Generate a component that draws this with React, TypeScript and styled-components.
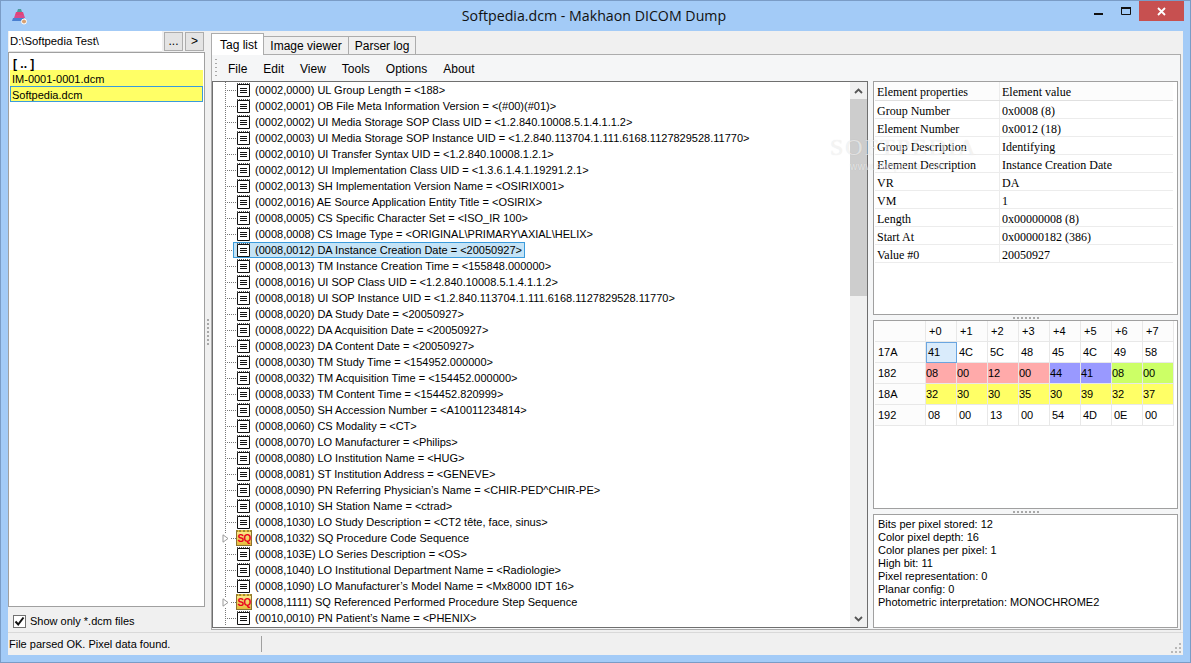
import React from 'react';
import styled, { createGlobalStyle } from 'styled-components';

const tags: [string, boolean?][] = [
  ['(0002,0000) UL Group Length = <188>'],
  ['(0002,0001) OB File Meta Information Version = <(#00)(#01)>'],
  ['(0002,0002) UI Media Storage SOP Class UID = <1.2.840.10008.5.1.4.1.1.2>'],
  ['(0002,0003) UI Media Storage SOP Instance UID = <1.2.840.113704.1.111.6168.1127829528.11770>'],
  ['(0002,0010) UI Transfer Syntax UID = <1.2.840.10008.1.2.1>'],
  ['(0002,0012) UI Implementation Class UID = <1.3.6.1.4.1.19291.2.1>'],
  ['(0002,0013) SH Implementation Version Name = <OSIRIX001>'],
  ['(0002,0016) AE Source Application Entity Title = <OSIRIX>'],
  ['(0008,0005) CS Specific Character Set = <ISO_IR 100>'],
  ['(0008,0008) CS Image Type = <ORIGINAL\\PRIMARY\\AXIAL\\HELIX>'],
  ['(0008,0012) DA Instance Creation Date = <20050927>'],
  ['(0008,0013) TM Instance Creation Time = <155848.000000>'],
  ['(0008,0016) UI SOP Class UID = <1.2.840.10008.5.1.4.1.1.2>'],
  ['(0008,0018) UI SOP Instance UID = <1.2.840.113704.1.111.6168.1127829528.11770>'],
  ['(0008,0020) DA Study Date = <20050927>'],
  ['(0008,0022) DA Acquisition Date = <20050927>'],
  ['(0008,0023) DA Content Date = <20050927>'],
  ['(0008,0030) TM Study Time = <154952.000000>'],
  ['(0008,0032) TM Acquisition Time = <154452.000000>'],
  ['(0008,0033) TM Content Time = <154452.820999>'],
  ['(0008,0050) SH Accession Number = <A10011234814>'],
  ['(0008,0060) CS Modality = <CT>'],
  ['(0008,0070) LO Manufacturer = <Philips>'],
  ['(0008,0080) LO Institution Name = <HUG>'],
  ['(0008,0081) ST Institution Address = <GENEVE>'],
  ['(0008,0090) PN Referring Physician\u2019s Name = <CHIR-PED^CHIR-PE>'],
  ['(0008,1010) SH Station Name = <ctrad>'],
  ['(0008,1030) LO Study Description = <CT2 t\u00eate, face, sinus>'],
  ['(0008,1032) SQ Procedure Code Sequence', true],
  ['(0008,103E) LO Series Description = <OS>'],
  ['(0008,1040) LO Institutional Department Name = <Radiologie>'],
  ['(0008,1090) LO Manufacturer\u2019s Model Name = <Mx8000 IDT 16>'],
  ['(0008,1111) SQ Referenced Performed Procedure Step Sequence', true],
  ['(0010,0010) PN Patient\u2019s Name = <PHENIX>'],
];

const properties = [
  ['Element properties', 'Element value'],
  ['Group Number', '0x0008 (8)'],
  ['Element Number', '0x0012 (18)'],
  ['Group Description', 'Identifying'],
  ['Element Description', 'Instance Creation Date'],
  ['VR', 'DA'],
  ['VM', '1'],
  ['Length', '0x00000008 (8)'],
  ['Start At', '0x00000182 (386)'],
  ['Value #0', '20050927'],
];

const hexRows: { offset: string; cells: [string, string?][] }[] = [
  { offset: '17A', cells: [['41', 'sel'], ['4C'], ['5C'], ['48'], ['45'], ['4C'], ['49'], ['58']] },
  {
    offset: '182',
    cells: [['08', 'r'], ['00', 'r'], ['12', 'r'], ['00', 'r'], ['44', 'b'], ['41', 'b'], ['08', 'g'], ['00', 'g']],
  },
  {
    offset: '18A',
    cells: [['32', 'y'], ['30', 'y'], ['30', 'y'], ['35', 'y'], ['30', 'y'], ['39', 'y'], ['32', 'y'], ['37', 'y']],
  },
  { offset: '192', cells: [['08'], ['00'], ['13'], ['00'], ['54'], ['4D'], ['0E'], ['00']] },
];

const imageInfo = [
  'Bits per pixel stored: 12',
  'Color pixel depth: 16',
  'Color planes per pixel: 1',
  'High bit: 11',
  'Pixel representation: 0',
  'Planar config: 0',
  'Photometric interpretation: MONOCHROME2',
];

const cellColors: Record<string, string> = {
  r: '#ffaaaa',
  b: '#9999ff',
  g: '#ccff66',
  y: '#ffff66',
  sel: '#d9ebfb',
};

const GlobalStyle = createGlobalStyle`
  html, body { margin: 0; padding: 0; height: 100%; overflow: hidden; }
  body { font-family: 'Liberation Sans', Arial, sans-serif; font-size: 11px; color: #000; }
  * { box-sizing: border-box; }
`;

const Window = styled.div`
  width: 1191px;
  height: 663px;
  background: #a3cbf7;
  border: 1px solid #7a9cc6;
  display: flex;
  flex-direction: column;
  padding: 0 7px 7px;
`;

const TitleBar = styled.div`
  height: 30px;
  flex: none;
  display: flex;
  align-items: flex-start;
  margin: 0 -1px 0 -1px;
`;

const AppIcon = styled.svg`
  width: 18px;
  height: 18px;
  margin: 6px 0 0 3px;
  flex: none;
`;

const Title = styled.div`
  flex: 1;
  text-align: center;
  font-family: 'Open Sans', sans-serif;
  font-size: 14.2px;
  line-height: 30px;
  padding-left: 75px;
  color: #111;
`;

const WinButton = styled.div<{ $w: number; $close?: boolean }>`
  width: ${(p) => p.$w}px;
  height: 20px;
  flex: none;
  display: flex;
  align-items: center;
  justify-content: center;
  background: ${(p) => (p.$close ? '#c75050' : 'transparent')};
`;

const Client = styled.div`
  flex: 1;
  min-height: 0;
  background: #f0f0f0;
  display: flex;
  flex-direction: column;
`;

const Main = styled.div`
  flex: 1;
  min-height: 0;
  display: flex;
`;

const LeftPane = styled.div`
  width: 197px;
  flex: none;
  display: flex;
  flex-direction: column;
`;

const PathRow = styled.div`
  height: 21px;
  flex: none;
  display: flex;
  padding-left: 1px;
`;

const PathInput = styled.div`
  width: 153px;
  background: #fff;
  border-bottom: 1px solid #e3e3e3;
  padding-left: 1px;
  line-height: 20px;
  font-size: 11.3px;
`;

const SmallButton = styled.div`
  width: 19px;
  height: 19px;
  margin: 1px 0 0 2px;
  background: #e4e4e4;
  border: 1px solid #adadad;
  text-align: center;
  line-height: 17px;
  font-size: 12px;
`;

const FileList = styled.div`
  height: 555px;
  flex: none;
  background: #fff;
  border: 1px solid #a0a0a0;
  padding: 1px;
  font-size: 11px;
`;

const FileRow = styled.div<{ $yellow?: boolean; $focus?: boolean; $bold?: boolean }>`
  height: 16px;
  line-height: ${(p) => (p.$bold ? 20 : p.$focus ? 17 : 19)}px;
  background: ${(p) => (p.$yellow ? '#ffff66' : 'transparent')};
  font-weight: ${(p) => (p.$bold ? 700 : 400)};
  font-size: ${(p) => (p.$bold ? 12 : 11)}px;
  border: ${(p) => (p.$focus ? '1px solid #3a9bdc' : 'none')};
  padding-left: ${(p) => (p.$bold ? 3 : p.$focus ? 1 : 2)}px;
`;

const CheckRow = styled.div`
  height: 25px;
  flex: none;
  display: flex;
  align-items: center;
  gap: 4px;
  padding: 3px 0 0 5px;
`;

const CheckBox = styled.div`
  width: 13px;
  height: 13px;
  background: #fff;
  border: 1px solid #707070;
  display: flex;
  align-items: center;
  justify-content: center;
`;

const VSplitter = styled.div`
  width: 6px;
  flex: none;
  display: flex;
  flex-direction: column;
  align-items: center;
  justify-content: center;
  gap: 2px;
`;

const GripDot = styled.i`
  width: 2px;
  height: 2px;
  background: #a8a8a8;
  display: block;
`;

const TabArea = styled.div`
  flex: 1;
  min-width: 0;
  display: flex;
  flex-direction: column;
  padding: 5px 2px 2px 0;
`;

const TabStrip = styled.div`
  height: 18px;
  flex: none;
  display: flex;
  position: relative;
  z-index: 1;
`;

const Tab = styled.div<{ $active?: boolean }>`
  height: ${(p) => (p.$active ? 22 : 19)}px;
  margin-top: ${(p) => (p.$active ? -3 : 0)}px;
  padding: 0 6px 0 ${(p) => (p.$active ? 8 : 6)}px;
  margin-right: -1px;
  background: ${(p) => (p.$active ? '#fff' : '#f0f0f0')};
  border: 1px solid #acacac;
  border-bottom: ${(p) => (p.$active ? 'none' : '1px solid #acacac')};
  line-height: ${(p) => (p.$active ? 22 : 18)}px;
  font-size: 12px;
`;

const Page = styled.div`
  flex: 1;
  min-height: 0;
  background: #f5f6f7;
  border: 1px solid #acacac;
  display: flex;
  flex-direction: column;
  padding-right: 1px;
`;

const ToolBar = styled.div`
  height: 26px;
  flex: none;
  display: flex;
  align-items: center;
  padding: 2px 0 0 3px;
`;

const ToolGrip = styled.div`
  width: 2px;
  height: 20px;
  background: repeating-linear-gradient(to bottom, #a8a8a8 0 1px, transparent 1px 4px);
  margin-right: 11px;
`;

const MenuItem = styled.span`
  font-size: 12px;
  margin-right: 16px;
`;

const Work = styled.div`
  flex: 1;
  min-height: 0;
  display: flex;
`;

const TreePane = styled.div`
  width: 656px;
  flex: none;
  background: #fff;
  border: 1px solid #6f6f6f;
  display: flex;
  min-height: 0;
  margin-bottom: 1px;
`;

const TreeBody = styled.div`
  flex: 1;
  min-width: 0;
  overflow: hidden;
`;

const Row = styled.div`
  height: 16px;
  display: flex;
  align-items: center;
`;

const Connector = styled.div`
  width: 23px;
  height: 16px;
  flex: none;
  display: flex;
  align-items: center;
  padding-left: 9px;
  background:
    repeating-linear-gradient(to bottom, #777 0 1px, transparent 1px 2px) 12px 0 / 1px 16px no-repeat,
    repeating-linear-gradient(to right, #777 0 1px, transparent 1px 2px) 12px 8px / 11px 1px no-repeat;
`;

const Expander = styled.svg`
  width: 7px;
  height: 9px;
  background: #fff;
  box-shadow: 0 0 0 1px #fff;
`;

const DocIcon = styled.svg`
  width: 15px;
  height: 16px;
  flex: none;
`;

const Folder = styled.div`
  width: 16px;
  height: 16px;
  flex: none;
  margin-right: -1px;
  background: linear-gradient(#fbe98a, #e6bb3c);
  border: 1px solid #8a7230;
  border-top: 2px dotted #a08a30;
  color: #e8001c;
  font-family: 'Liberation Sans', sans-serif;
  font-size: 10px;
  font-weight: 700;
  line-height: 13px;
  text-align: center;
  letter-spacing: -0.7px;
`;

const TagLabel = styled.div`
  height: 16px;
  flex: none;
  margin-left: 2px;
  padding: 0 2px;
  line-height: 16px;
  white-space: nowrap;
  font-size: 11px;
  color: #000;
`;

const SelectedWrap = styled.div`
  display: flex;
  align-items: center;
  height: 16px;
  background: #c4e3f6;
  border: 1px solid #3a9bdc;
  margin-left: -3px;
  padding-left: 2px;
`;

const ScrollBar = styled.div`
  width: 17px;
  flex: none;
  background: #f0f0f0;
  display: flex;
  flex-direction: column;
`;

const ScrollArrow = styled.div`
  height: 17px;
  flex: none;
  display: flex;
  align-items: center;
  justify-content: center;
`;

const ScrollThumb = styled.div`
  height: 197px;
  flex: none;
  background: #cdcdcd;
`;

const ScrollTrack = styled.div`
  flex: 1;
`;

const RightPane = styled.div`
  width: 305px;
  margin-left: 5px;
  flex: none;
  display: flex;
  flex-direction: column;
  margin-bottom: 1px;
`;

const Panel = styled.div<{ $h: number }>`
  height: ${(p) => p.$h}px;
  flex: none;
  background: #fff;
  border: 1px solid #a0a0a0;
  overflow: hidden;
`;

const HGrip = styled.div`
  height: 5px;
  flex: none;
  display: flex;
  align-items: center;
  justify-content: center;
  gap: 2px;
`;

const PropRow = styled.div`
  display: flex;
  height: 18px;
  width: 298px;
  margin-left: 1px;
  border-bottom: 1px solid #ececec;
  font-family: 'Liberation Serif', serif;
  font-size: 12px;
  line-height: 20px;
  &:first-child { height: 19px; background: #fcfcfc; border-bottom-color: #e0e0e0; }
`;

const PropName = styled.div`
  width: 125px;
  flex: none;
  padding-left: 2px;
  border-right: 1px solid #ececec;
`;

const PropValue = styled.div`
  flex: 1;
  padding-left: 2px;
`;

const HexGrid = styled.div`
  display: grid;
  grid-template-columns: 51px repeat(8, 31px);
  grid-auto-rows: 21px;
  margin-left: 1px;
`;

const HexHead = styled.div`
  background: #fcfcfc;
  border-right: 1px solid #e8e8e8;
  border-bottom: 1px solid #e8e8e8;
  padding-left: 3px;
  line-height: 20px;
  font-size: 11px;
`;

const HexOffset = styled(HexHead)`
  line-height: 21px;
`;

const HexCell = styled.div<{ $kind?: string }>`
  background: ${(p) => (p.$kind ? cellColors[p.$kind] : '#fff')};
  border-right: 1px solid #e8e8e8;
  border-bottom: 1px solid #e8e8e8;
  border: ${(p) => (p.$kind === 'sel' ? '1px solid #6aa5e0' : '')};
  padding-left: ${(p) => (p.$kind === 'sel' ? 1 : p.$kind ? 0 : 2)}px;
  line-height: ${(p) => (p.$kind === 'sel' ? 19 : 21)}px;
  font-size: 11px;
`;

const InfoText = styled.div`
  padding: 3px 0 0 4px;
  font-size: 11px;
  line-height: 13px;
`;

const StatusBar = styled.div`
  height: 23px;
  flex: none;
  border-top: 1px solid #d9d9d9;
  display: flex;
  align-items: center;
  justify-content: space-between;
  font-size: 11px;
`;

const StatusText = styled.div`
  width: 254px;
  height: 16px;
  line-height: 17px;
  padding-left: 1px;
  border-right: 1px solid #a0a0a0;
`;

const SizeGrip = styled.svg`
  width: 12px;
  height: 12px;
  margin: 8px 1px 0 0;
`;

const Watermark = styled.div`
  position: absolute;
  left: 830px;
  top: 134px;
  pointer-events: none;
  font-family: 'Liberation Serif', serif;
  font-size: 24px;
  line-height: 26px;
  letter-spacing: 2px;
  color: rgba(255, 255, 255, 0.6);
  text-shadow: 0 0 1px rgba(0, 0, 0, 0.12);
`;

const WatermarkUrl = styled.div`
  font-family: 'Liberation Sans', sans-serif;
  font-size: 10px;
  line-height: 11px;
  letter-spacing: 0.5px;
  margin: 1px 0 0 20px;
`;

const Doc = () => (
  <DocIcon viewBox="0 0 15 16">
    <path d="M1.5 2.5h12v12h-12z" fill="#fff" stroke="#111" />
    <path d="M1 1.5h13" stroke="#555" strokeDasharray="1 1" />
    <path d="M4 6.5h7M4 8.5h7M4 10.5h7" stroke="#111" />
  </DocIcon>
);

const Grip = ({ n }: { n: number }) => (
  <>
    {Array.from({ length: n }, (_, i) => (
      <GripDot key={i} />
    ))}
  </>
);

const TagRow = ({ text, seq, selected }: { text: string; seq?: boolean; selected?: boolean }) => {
  const icon = seq ? <Folder>SQ</Folder> : <Doc />;
  return (
    <Row>
      <Connector>
        {seq && (
          <Expander viewBox="0 0 7 9">
            <path d="M1 .8 6 4.5 1 8.2z" fill="#fff" stroke="#999" />
          </Expander>
        )}
      </Connector>
      {selected ? (
        <SelectedWrap>
          {icon}
          <TagLabel>{text}</TagLabel>
        </SelectedWrap>
      ) : (
        <>
          {icon}
          <TagLabel>{text}</TagLabel>
        </>
      )}
    </Row>
  );
};

export default function App() {
  return (
    <>
      <GlobalStyle />
      <Window>
        <TitleBar>
          <AppIcon viewBox="0 0 18 18">
            <path d="M8 2h3l1 3H7z" fill="#4a9a9a" />
            <path d="M6 5h7l1 3H5z" fill="#e0447a" />
            <path d="M5 8h9l1 3H4z" fill="#d94a8c" />
            <path d="M3 11h11v3H2z" fill="#4a7fd0" />
            <circle cx="14" cy="14.5" r="2.5" fill="#d8a070" stroke="#fff" />
          </AppIcon>
          <Title>Softpedia.dcm - Makhaon DICOM Dump</Title>
          <WinButton $w={27}>
            <svg width="9" height="20" viewBox="0 0 9 20">
              <rect width="9" height="2" y="12" fill="#111" />
            </svg>
          </WinButton>
          <WinButton $w={27}>
            <svg width="10" height="20" viewBox="0 0 10 20">
              <path d="M.5 7.5h9v6h-9z" fill="none" stroke="#111" />
              <path d="M0 7h10" stroke="#111" strokeWidth="2" />
            </svg>
          </WinButton>
          <WinButton $w={45} $close>
            <svg width="9" height="9" viewBox="0 0 9 9">
              <path d="M1 1l7 7M8 1l-7 7" stroke="#fff" strokeWidth="1.8" />
            </svg>
          </WinButton>
        </TitleBar>
        <Client>
          <Main>
            <LeftPane>
              <PathRow>
                <PathInput>D:\Softpedia Test\</PathInput>
                <SmallButton>...</SmallButton>
                <SmallButton>&gt;</SmallButton>
              </PathRow>
              <FileList>
                <FileRow $bold>[ .. ]</FileRow>
                <FileRow $yellow>IM-0001-0001.dcm</FileRow>
                <FileRow $yellow $focus>Softpedia.dcm</FileRow>
              </FileList>
              <CheckRow>
                <CheckBox>
                  <svg width="11" height="11" viewBox="0 0 11 11">
                    <path d="M1.5 5.5 4.2 8.5 9.5 1.5" fill="none" stroke="#111" strokeWidth="2" />
                  </svg>
                </CheckBox>
                Show only *.dcm files
              </CheckRow>
            </LeftPane>
            <VSplitter>
              <Grip n={7} />
            </VSplitter>
            <TabArea>
              <TabStrip>
                <Tab $active>Tag list</Tab>
                <Tab>Image viewer</Tab>
                <Tab>Parser log</Tab>
              </TabStrip>
              <Page>
                <ToolBar>
                  <ToolGrip />
                  <MenuItem>File</MenuItem>
                  <MenuItem>Edit</MenuItem>
                  <MenuItem>View</MenuItem>
                  <MenuItem>Tools</MenuItem>
                  <MenuItem>Options</MenuItem>
                  <MenuItem>About</MenuItem>
                </ToolBar>
                <Work>
                  <TreePane>
                    <TreeBody>
                      {tags.map(([text, seq], i) => (
                        <TagRow key={text} text={text} seq={seq} selected={i === 10} />
                      ))}
                    </TreeBody>
                    <ScrollBar>
                      <ScrollArrow>
                        <svg width="9" height="6" viewBox="0 0 9 6">
                          <path d="M1 5l3.5-3.5L8 5" fill="none" stroke="#555" strokeWidth="1.8" />
                        </svg>
                      </ScrollArrow>
                      <ScrollThumb />
                      <ScrollTrack />
                      <ScrollArrow>
                        <svg width="9" height="6" viewBox="0 0 9 6">
                          <path d="M1 1l3.5 3.5L8 1" fill="none" stroke="#555" strokeWidth="1.8" />
                        </svg>
                      </ScrollArrow>
                    </ScrollBar>
                  </TreePane>
                  <RightPane>
                    <Panel $h={234}>
                      {properties.map(([name, value]) => (
                        <PropRow key={name}>
                          <PropName>{name}</PropName>
                          <PropValue>{value}</PropValue>
                        </PropRow>
                      ))}
                    </Panel>
                    <HGrip>
                      <Grip n={7} />
                    </HGrip>
                    <Panel $h={189}>
                      <HexGrid>
                        <HexHead />
                        {[0, 1, 2, 3, 4, 5, 6, 7].map((n) => (
                          <HexHead key={n}>+{n}</HexHead>
                        ))}
                        {hexRows.map((row) => (
                          <React.Fragment key={row.offset}>
                            <HexOffset>{row.offset}</HexOffset>
                            {row.cells.map(([value, kind], i) => (
                              <HexCell key={i} $kind={kind}>
                                {value}
                              </HexCell>
                            ))}
                          </React.Fragment>
                        ))}
                      </HexGrid>
                    </Panel>
                    <HGrip>
                      <Grip n={7} />
                    </HGrip>
                    <Panel $h={114}>
                      <InfoText>
                        {imageInfo.map((line) => (
                          <div key={line}>{line}</div>
                        ))}
                      </InfoText>
                    </Panel>
                  </RightPane>
                </Work>
              </Page>
            </TabArea>
          </Main>
          <StatusBar>
            <StatusText>File parsed OK. Pixel data found.</StatusText>
            <SizeGrip viewBox="0 0 12 12">
              <path d="M9 1h2v2H9zM5 5h2v2H5zM9 5h2v2H9zM1 9h2v2H1zM5 9h2v2H5zM9 9h2v2H9z" fill="#b8b8b8" />
            </SizeGrip>
          </StatusBar>
        </Client>
        <Watermark>
          SOFTPEDIA
          <WatermarkUrl>www.softpedia.com</WatermarkUrl>
        </Watermark>
      </Window>
    </>
  );
}
